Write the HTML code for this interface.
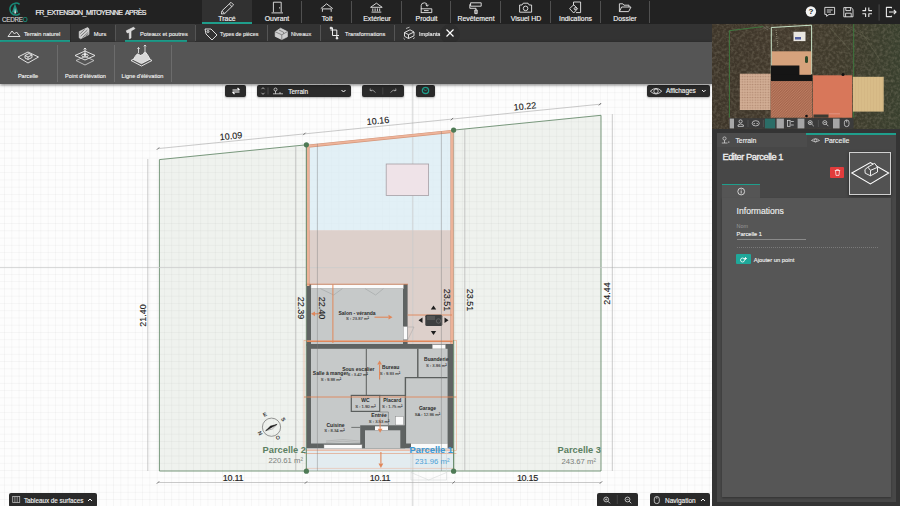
<!DOCTYPE html>
<html><head><meta charset="utf-8">
<style>
*{box-sizing:border-box}
html,body{margin:0;padding:0}
body{width:900px;height:506px;overflow:hidden;position:relative;background:#fff;font-family:"Liberation Sans",sans-serif;color:#fff}
.abs{position:absolute}
#canvas{left:0;top:84px;width:712px;height:422px;background-color:#fdfdfd;background-image:linear-gradient(90deg,rgba(0,0,0,0.033) 1px,transparent 1px),linear-gradient(180deg,rgba(0,0,0,0.033) 1px,transparent 1px);background-size:7.28px 7.28px;background-position:4.1px 1.0px}
#top{left:0;top:0;width:900px;height:24px;background:#222}
#sub{left:0;top:24px;width:712px;height:18px;background:#333}
#tools{left:0;top:42px;width:712px;height:41.5px;background:#555;box-shadow:0 1px 3px rgba(0,0,0,.5)}
.tab{position:absolute;top:0;height:24px;width:50px;text-align:center;font-size:7.5px;}
.tab .lbl{position:absolute;left:0;right:0;top:14px;line-height:9px}
.tab.sep{border-right:1px solid #3a3a3a}
.stab{position:absolute;top:0;height:18px;font-size:6.5px;line-height:18px;border-right:1px solid #4a4a4a}
.tool{position:absolute;top:0;height:41px;border-right:1px solid #6a6a6a;font-size:6px;text-align:center}
.tool .lbl{position:absolute;left:0;right:0;top:30px;line-height:8px}
.btn{position:absolute;background:#2b2b2b;border-radius:2px;height:12px}
</style></head>
<body>
<div id="canvas" class="abs"></div>

<!-- PLAN SVG -->
<svg class="abs" style="left:0;top:0" width="900" height="506" viewBox="0 0 900 506" font-family="Liberation Sans, sans-serif">
<polygon points="159.4,159.6 306.4,144.8 306.4,471 159.4,471" fill="rgba(120,150,110,0.10)" stroke="#6a8c6e" stroke-width="0.9"/>
<polygon points="453.6,130.1 601,115.3 601,471 453.6,471" fill="rgba(120,150,110,0.10)" stroke="#6a8c6e" stroke-width="0.9"/>
<polygon points="306.4,144.8 453.6,130.1 453.6,230.2 306.4,230.2" fill="#daecf3" fill-opacity="0.78"/>
<rect x="306.4" y="230.2" width="147.20000000000005" height="240.8" fill="#ddd0cb"/>
<rect x="306.4" y="448.3" width="147.20000000000005" height="22.69999999999999" fill="#e3eef4" fill-opacity="0.9"/>
<line x1="0" y1="267.6" x2="712" y2="267.6" stroke="#c9cccb" stroke-width="0.8"/>
<line x1="412.8" y1="84" x2="412.8" y2="506" stroke="#c9cccb" stroke-width="0.8"/>
<rect x="386.2" y="164" width="42.4" height="31.4" fill="#efe3e8" stroke="#a59ea4" stroke-width="0.8"/>
<line x1="158" y1="148.6" x2="601" y2="104.1" stroke="#a6a6a6" stroke-width="0.6"/>
<line x1="158" y1="482.5" x2="601" y2="482.5" stroke="#a6a6a6" stroke-width="0.6"/>
<line x1="147.8" y1="159" x2="147.8" y2="471" stroke="#a6a6a6" stroke-width="0.6"/>
<line x1="295.8" y1="146.4" x2="295.8" y2="471" stroke="#a6a6a6" stroke-width="0.6"/>
<line x1="464.8" y1="128.9" x2="464.8" y2="471" stroke="#a6a6a6" stroke-width="0.6"/>
<line x1="612.3" y1="114.1" x2="612.3" y2="471" stroke="#a6a6a6" stroke-width="0.6"/>
<line x1="156.8" y1="149.8" x2="159.2" y2="147.4" stroke="#555" stroke-width="0.8"/>
<line x1="303.2" y1="135.1" x2="305.59999999999997" y2="132.7" stroke="#555" stroke-width="0.8"/>
<line x1="450.8" y1="120.3" x2="453.2" y2="117.9" stroke="#555" stroke-width="0.8"/>
<line x1="598.8" y1="105.4" x2="601.2" y2="103.0" stroke="#555" stroke-width="0.8"/>
<line x1="156.8" y1="483.7" x2="159.2" y2="481.3" stroke="#555" stroke-width="0.8"/>
<line x1="304.8" y1="483.7" x2="307.2" y2="481.3" stroke="#555" stroke-width="0.8"/>
<line x1="452.40000000000003" y1="483.7" x2="454.8" y2="481.3" stroke="#555" stroke-width="0.8"/>
<line x1="599.8" y1="483.7" x2="602.2" y2="481.3" stroke="#555" stroke-width="0.8"/>
<rect x="306.4" y="284" width="101.2" height="62" fill="#5f6362"/>
<rect x="311" y="288.5" width="92" height="56" fill="#c6c9c9"/>
<rect x="311" y="284.2" width="92.5" height="4.5" fill="#fbfbfb" stroke="#9a9a9a" stroke-width="0.4"/>
<rect x="403.2" y="326.6" width="4.2" height="13" fill="#fbfbfb" stroke="#999" stroke-width="0.4"/>
<path d="M320.3 288.6 L333.7 295 L342.4 288.6 M365 288.6 L375.6 295 L383.5 288.6" fill="none" stroke="#8d9292" stroke-width="0.4"/>
<path d="M407.6 327 L414 327 L407.6 340" fill="none" stroke="#9a9a9a" stroke-width="0.4"/>
<rect x="306.4" y="344" width="146.8" height="104.3" fill="#5f6362"/>
<rect x="311" y="348.8" width="136.6" height="94.7" fill="#c6c9c9"/>
<rect x="432.3" y="344.6" width="13.2" height="4.3" fill="#fbfbfb" stroke="#999" stroke-width="0.4"/>
<line x1="366.3" y1="348.8" x2="366.3" y2="395.4" stroke="#5a5e5d" stroke-width="1"/>
<line x1="417.8" y1="348.8" x2="417.8" y2="377.6" stroke="#5a5e5d" stroke-width="1.4"/>
<line x1="405.4" y1="377.6" x2="447.6" y2="377.6" stroke="#5a5e5d" stroke-width="1.4"/>
<line x1="405.4" y1="377" x2="405.4" y2="444" stroke="#5a5e5d" stroke-width="1.4"/>
<line x1="379.7" y1="395.4" x2="405.4" y2="395.4" stroke="#5a5e5d" stroke-width="1"/>
<rect x="351.3" y="395.4" width="28.4" height="16" fill="none" stroke="#5a5e5d" stroke-width="1.2"/>
<path d="M379.7 412 L388.4 412 L388.4 425" fill="none" stroke="#5a5e5d" stroke-width="0.5"/>
<line x1="351.3" y1="427.4" x2="360.2" y2="427.4" stroke="#5a5e5d" stroke-width="0.8"/>
<rect x="360.2" y="425.3" width="45" height="23" fill="#5f6362"/>
<rect x="365" y="430.3" width="35.3" height="18" fill="#c6c9c9"/>
<rect x="375" y="426.3" width="13" height="3.8" fill="#fbfbfb"/>
<rect x="395.5" y="416.3" width="8" height="8.7" fill="#fbfbfb" stroke="#888" stroke-width="0.5"/>
<rect x="324" y="444.8" width="38" height="3.9" fill="#fbfbfb" stroke="#999" stroke-width="0.4"/>
<path d="M326 441 Q343 438 360 441 M326 442.5 Q343 440 360 442.5" fill="none" stroke="#999" stroke-width="0.4"/>
<rect x="411" y="443.5" width="36.6" height="4.8" fill="#fbfbfb"/>
<polyline points="308.0,286 308.0,146.1 452.0,131.4 452.0,344" fill="none" stroke="#d4967a" stroke-width="3.2"/>
<polyline points="308.0,286 308.0,146.1 452.0,131.4 452.0,344" fill="none" stroke="#eeb49a" stroke-width="1.9"/>
<line x1="306.4" y1="449.8" x2="453.6" y2="449.8" stroke="#eab9a4" stroke-width="0.8"/>
<line x1="306.4" y1="468.4" x2="453.6" y2="468.4" stroke="#eab9a4" stroke-width="0.6"/>
<rect x="304" y="340.4" width="152.4" height="110" fill="none" stroke="#eba98a" stroke-width="0.6"/>
<line x1="306.4" y1="341.4" x2="452.6" y2="341.4" stroke="#e0875a" stroke-width="1.2"/>
<line x1="304" y1="397" x2="456.4" y2="397" stroke="#e0875a" stroke-width="0.9"/>
<line x1="304" y1="453.5" x2="456.4" y2="453.5" stroke="#e0875a" stroke-width="0.5"/>
<line x1="332.9" y1="284.4" x2="332.9" y2="343" stroke="#e0875a" stroke-width="1"/>
<line x1="407.6" y1="315" x2="452" y2="315" stroke="#e0875a" stroke-width="0.9"/>
<line x1="306.4" y1="284.2" x2="408" y2="284.2" stroke="#e0875a" stroke-width="0.8"/>
<line x1="374.5" y1="317.2" x2="388.5" y2="317.2" stroke="#e0875a" stroke-width="1.1"/><polygon points="392.5,317.2 388.5,319.6 388.5,314.8" fill="#e0875a"/>
<line x1="320" y1="313.8" x2="315.0" y2="313.8" stroke="#e0875a" stroke-width="1.1"/><polygon points="311,313.8 315.0,311.4 315.0,316.2" fill="#e0875a"/>
<line x1="379.6" y1="379.4" x2="379.6" y2="364.4" stroke="#e0875a" stroke-width="1.1"/><polygon points="379.6,360.4 382.0,364.4 377.2,364.4" fill="#e0875a"/>
<line x1="380.1" y1="418.5" x2="380.1" y2="428.7" stroke="#e0875a" stroke-width="1.1"/><polygon points="380.1,432.7 377.7,428.7 382.5,428.7" fill="#e0875a"/>
<line x1="380.9" y1="452" x2="380.9" y2="463.5" stroke="#e0875a" stroke-width="1.1"/><polygon points="380.9,468 378.5,463.5 383.3,463.5" fill="#e0875a"/>
<rect x="425.3" y="314.7" width="17" height="11.3" rx="1.5" fill="#3d3f40"/>
<rect x="427" y="316" width="8" height="4" fill="#555" />
<circle cx="438.5" cy="321" r="2.2" fill="none" stroke="#777" stroke-width="0.6"/>
<polygon points="433.5,305.5 430.8,309.5 436.2,309.5" fill="#1e1e1e"/>
<polygon points="433.5,335 430.8,331 436.2,331" fill="#1e1e1e"/>
<polygon points="418.5,320.3 422.5,317.6 422.5,323" fill="#1e1e1e"/>
<polygon points="448.5,320.3 444.5,317.6 444.5,323" fill="#1e1e1e"/>
<polyline points="306.4,286 306.4,144.8" fill="none" stroke="#6a8c6e" stroke-width="0.9"/>
<line x1="306.4" y1="448.3" x2="306.4" y2="471" stroke="#6a8c6e" stroke-width="0.9"/>
<line x1="453.6" y1="448.3" x2="453.6" y2="471" stroke="#6a8c6e" stroke-width="0.9"/>
<line x1="306.4" y1="471" x2="453.6" y2="471" stroke="#7f9a82" stroke-width="0.8"/>
<path d="M411 449 L411 480 L446.5 480 L446.5 449 M411 472.5 L428.7 480 L446.5 472.5" fill="none" stroke="#cfd2d2" stroke-width="0.5"/>
<line x1="317.4" y1="143.7" x2="317.4" y2="471" stroke="#7a7a7a" stroke-opacity="0.7" stroke-width="0.6"/>
<line x1="441.4" y1="131.3" x2="441.4" y2="471" stroke="#7a7a7a" stroke-opacity="0.7" stroke-width="0.6"/>
<line x1="453.6" y1="340" x2="453.6" y2="471" stroke="#6a8c6e" stroke-width="0.9"/>
<line x1="306.4" y1="284" x2="306.4" y2="448.3" stroke="#6a8c6e" stroke-width="0.7" stroke-opacity="0.8"/>
<circle cx="306.4" cy="144.8" r="2.6" fill="#4e7a55"/>
<circle cx="453.6" cy="130.1" r="2.6" fill="#4e7a55"/>
<circle cx="306.4" cy="471.2" r="2.6" fill="#4e7a55"/>
<circle cx="453.6" cy="471.2" r="2.6" fill="#4e7a55"/>
<circle cx="271.5" cy="427.2" r="9.1" fill="none" stroke="#555" stroke-width="0.6"/>
<polygon points="265.7,430.7 272.4,428.9 277.1,424.3" fill="#fff" stroke="#333" stroke-width="0.4"/>
<polygon points="265.7,430.7 270.4,426.1 277.1,424.3" fill="#1a1a1a" stroke="#1a1a1a" stroke-width="0.4"/>
<text x="265" y="416.3" font-size="5.4" font-weight="bold" fill="#333" text-anchor="middle" transform="rotate(-30 265 414.7)">E</text>
<text x="283" y="421.2" font-size="5.4" font-weight="bold" fill="#333" text-anchor="middle" transform="rotate(60 283 419.59999999999997)">S</text>
<text x="278" y="439.5" font-size="5.4" font-weight="bold" fill="#333" text-anchor="middle" transform="rotate(-30 278 437.9)">O</text>
<text x="259.8" y="435" font-size="5.4" font-weight="bold" fill="#333" text-anchor="middle" transform="rotate(60 259.8 433.4)">N</text>
<text x="231" y="136.2" font-size="9" font-weight="normal" fill="#222" text-anchor="middle" dominant-baseline="central" transform="rotate(-5.73 231 136.2)" stroke="#222" stroke-width="0.12">10.09</text>
<text x="378" y="120.8" font-size="9" font-weight="normal" fill="#222" text-anchor="middle" dominant-baseline="central" transform="rotate(-5.73 378 120.8)" stroke="#222" stroke-width="0.12">10.16</text>
<text x="525" y="106.4" font-size="9" font-weight="normal" fill="#222" text-anchor="middle" dominant-baseline="central" transform="rotate(-5.73 525 106.4)" stroke="#222" stroke-width="0.12">10.22</text>
<text x="233" y="477.6" font-size="9" font-weight="normal" fill="#222" text-anchor="middle" dominant-baseline="central" stroke="#222" stroke-width="0.15" letter-spacing="-0.3">10.11</text>
<text x="380" y="477.6" font-size="9" font-weight="normal" fill="#222" text-anchor="middle" dominant-baseline="central" stroke="#222" stroke-width="0.15" letter-spacing="-0.3">10.11</text>
<text x="527.4" y="477.6" font-size="9" font-weight="normal" fill="#222" text-anchor="middle" dominant-baseline="central" stroke="#222" stroke-width="0.15" letter-spacing="-0.3">10.15</text>
<text x="143.3" y="315.4" font-size="9" font-weight="normal" fill="#222" text-anchor="middle" dominant-baseline="central" transform="rotate(-90.00 143.3 315.4)" stroke="#222" stroke-width="0.12">21.40</text>
<text x="606.6" y="293.6" font-size="9" font-weight="normal" fill="#222" text-anchor="middle" dominant-baseline="central" transform="rotate(-90.00 606.6 293.6)" stroke="#222" stroke-width="0.12">24.44</text>
<text x="300.5" y="308" font-size="9" font-weight="normal" fill="#222" text-anchor="middle" dominant-baseline="central" transform="rotate(90.00 300.5 308)" stroke="#222" stroke-width="0.12">22.39</text>
<text x="322.2" y="308" font-size="9" font-weight="normal" fill="#222" text-anchor="middle" dominant-baseline="central" transform="rotate(90.00 322.2 308)" stroke="#222" stroke-width="0.12">22.40</text>
<text x="446.5" y="300.1" font-size="9" font-weight="normal" fill="#222" text-anchor="middle" dominant-baseline="central" transform="rotate(90.00 446.5 300.1)" stroke="#222" stroke-width="0.12">23.51</text>
<text x="469.7" y="300.1" font-size="9" font-weight="normal" fill="#222" text-anchor="middle" dominant-baseline="central" transform="rotate(90.00 469.7 300.1)" stroke="#222" stroke-width="0.12">23.51</text>
<text x="306" y="450.2" font-size="9.3" font-weight="bold" fill="#5b8062" text-anchor="end" dominant-baseline="central">Parcelle 2</text>
<text x="303" y="460.6" font-size="7.7" font-weight="normal" fill="#7a7f7a" text-anchor="end" dominant-baseline="central">220.61 m²</text>
<text x="601" y="450.2" font-size="9.3" font-weight="bold" fill="#5b8062" text-anchor="end" dominant-baseline="central">Parcelle 3</text>
<text x="596" y="461" font-size="7.7" font-weight="normal" fill="#7a7f7a" text-anchor="end" dominant-baseline="central">243.67 m²</text>
<text x="453" y="450.4" font-size="9.3" font-weight="bold" fill="#3b98d4" text-anchor="end" dominant-baseline="central">Parcelle 1</text>
<text x="449.5" y="461" font-size="7.7" font-weight="normal" fill="#4ba0d6" text-anchor="end" dominant-baseline="central">231.96 m²</text>
<text x="357" y="313.2" font-size="5" font-weight="bold" fill="#2a2a2a" text-anchor="middle" dominant-baseline="central">Salon - véranda</text>
<text x="358.3" y="368.7" font-size="5" font-weight="bold" fill="#2a2a2a" text-anchor="middle" dominant-baseline="central">Sous escalier</text>
<text x="330.5" y="373" font-size="5" font-weight="bold" fill="#2a2a2a" text-anchor="middle" dominant-baseline="central">Salle à manger</text>
<text x="390.7" y="367.2" font-size="5" font-weight="bold" fill="#2a2a2a" text-anchor="middle" dominant-baseline="central">Bureau</text>
<text x="436.3" y="359.2" font-size="5" font-weight="bold" fill="#2a2a2a" text-anchor="middle" dominant-baseline="central">Buanderie</text>
<text x="365.5" y="400.1" font-size="5" font-weight="bold" fill="#2a2a2a" text-anchor="middle" dominant-baseline="central">WC</text>
<text x="392.2" y="400.1" font-size="5" font-weight="bold" fill="#2a2a2a" text-anchor="middle" dominant-baseline="central">Placard</text>
<text x="379.1" y="414.9" font-size="5" font-weight="bold" fill="#2a2a2a" text-anchor="middle" dominant-baseline="central">Entrée</text>
<text x="335.5" y="424.6" font-size="5" font-weight="bold" fill="#2a2a2a" text-anchor="middle" dominant-baseline="central">Cuisine</text>
<text x="427.5" y="408" font-size="5" font-weight="bold" fill="#2a2a2a" text-anchor="middle" dominant-baseline="central">Garage</text>
<text x="357.5" y="318.8" font-size="4.2" font-weight="normal" fill="#333" text-anchor="middle" dominant-baseline="central" stroke="#333" stroke-width="0.08">S : 23.87 m²</text>
<text x="357.7" y="374.6" font-size="4.2" font-weight="normal" fill="#333" text-anchor="middle" dominant-baseline="central" stroke="#333" stroke-width="0.08">S : 3.42 m²</text>
<text x="331" y="379" font-size="4.2" font-weight="normal" fill="#333" text-anchor="middle" dominant-baseline="central" stroke="#333" stroke-width="0.08">S : 9.98 m²</text>
<text x="390" y="373.1" font-size="4.2" font-weight="normal" fill="#333" text-anchor="middle" dominant-baseline="central" stroke="#333" stroke-width="0.08">S : 9.93 m²</text>
<text x="436.3" y="365" font-size="4.2" font-weight="normal" fill="#333" text-anchor="middle" dominant-baseline="central" stroke="#333" stroke-width="0.08">S : 3.96 m²</text>
<text x="365.5" y="406" font-size="4.2" font-weight="normal" fill="#333" text-anchor="middle" dominant-baseline="central" stroke="#333" stroke-width="0.08">S : 1.90 m²</text>
<text x="392.2" y="406" font-size="4.2" font-weight="normal" fill="#333" text-anchor="middle" dominant-baseline="central" stroke="#333" stroke-width="0.08">S : 1.75 m²</text>
<text x="379.1" y="421.1" font-size="4.2" font-weight="normal" fill="#333" text-anchor="middle" dominant-baseline="central" stroke="#333" stroke-width="0.08">S : 3.53 m²</text>
<text x="334.5" y="430" font-size="4.2" font-weight="normal" fill="#333" text-anchor="middle" dominant-baseline="central" stroke="#333" stroke-width="0.08">S : 8.34 m²</text>
<text x="427.5" y="414" font-size="4.2" font-weight="normal" fill="#333" text-anchor="middle" dominant-baseline="central" stroke="#333" stroke-width="0.08">SA : 12.96 m²</text>
</svg>

<!-- canvas buttons -->
<div class="abs" style="left:225.4px;top:84.8px;width:21px;height:12.2px;background:#2a2a2a;border-radius:2px;box-shadow:0 1px 2px rgba(0,0,0,.3)">
 <svg class="abs" style="left:5.5px;top:2.1px" width="10" height="8" viewBox="0 0 10 8"><path d="M1.5 3 L8.5 3 M6.5 1 L8.5 3 M1.5 5 L8.5 5 M3.5 7 L1.5 5" fill="none" stroke="#fff" stroke-width="1.1"/></svg>
</div>
<div class="abs" style="left:257.2px;top:84.8px;width:93.6px;height:12.2px;background:#2a2a2a;border-radius:2px;box-shadow:0 1px 2px rgba(0,0,0,.3)">
 <svg class="abs" style="left:0;top:0" width="94" height="12" viewBox="0 0 94 12">
  <path d="M4.5 4.2 L6 2.6 L7.5 4.2 M4.5 7.8 L6 9.4 L7.5 7.8" fill="none" stroke="#ccc" stroke-width="0.8"/>
  <line x1="11" y1="2.5" x2="11" y2="9.5" stroke="#666" stroke-width="0.6"/>
  <circle cx="18.5" cy="4.5" r="1.5" fill="none" stroke="#eee" stroke-width="0.7"/>
  <path d="M16 8.8 L26 8.8 M18.5 6 L18.5 8.8 M23 7 L23 8.8" fill="none" stroke="#eee" stroke-width="0.7"/>
  <path d="M84.5 5 L86.5 7 L88.5 5" fill="none" stroke="#fff" stroke-width="1"/>
 </svg>
 <div class="abs" style="left:31px;top:0.8px;font-size:6.5px;line-height:12.2px;color:#f2f2f2;-webkit-text-stroke:0.13px #f2f2f2">Terrain</div>
</div>
<div class="abs" style="left:362.3px;top:84.8px;width:41.6px;height:12.2px;background:#2a2a2a;border-radius:2px;box-shadow:0 1px 2px rgba(0,0,0,.3)">
 <svg class="abs" style="left:0;top:0" width="42" height="12" viewBox="0 0 42 12">
  <path d="M8 5.5 Q11 4 13.5 7.5 M8 5.5 L8.3 3.5 M8 5.5 L10 5.8" fill="none" stroke="#aaa" stroke-width="0.8"/>
  <line x1="20.8" y1="2.5" x2="20.8" y2="9.5" stroke="#555" stroke-width="0.6"/>
  <path d="M34 5.5 Q31 4 28.5 7.5 M34 5.5 L33.7 3.5 M34 5.5 L32 5.8" fill="none" stroke="#aaa" stroke-width="0.8"/>
 </svg>
</div>
<div class="abs" style="left:415.6px;top:84.8px;width:19.6px;height:12.2px;background:#2a2a2a;border-radius:2px;box-shadow:0 1px 2px rgba(0,0,0,.3)">
 <svg class="abs" style="left:5.3px;top:1.6px" width="9" height="9" viewBox="0 0 9 9"><circle cx="4.5" cy="4.5" r="3.2" fill="none" stroke="#1f9e8c" stroke-width="1.2"/><path d="M2.5 3 L4.5 5 L6 3.5 M4 6.5 L5 7.5" stroke="#1f9e8c" stroke-width="0.8" fill="none"/></svg>
</div>
<div class="abs" style="left:647.3px;top:84.7px;width:62.7px;height:12px;background:#2a2a2a;border-radius:2px;box-shadow:0 1px 2px rgba(0,0,0,.3)">
 <svg class="abs" style="left:0;top:0" width="63" height="12" viewBox="0 0 63 12">
  <path d="M3.3 6.2 Q9 0.6 14.7 6.2 Q9 11.8 3.3 6.2 Z" fill="none" stroke="#eee" stroke-width="0.8"/>
  <circle cx="9" cy="6.2" r="2.2" fill="none" stroke="#eee" stroke-width="0.8"/>
  <path d="M55 5 L56.8 6.8 L58.6 5" fill="none" stroke="#fff" stroke-width="1"/>
 </svg>
 <div class="abs" style="left:18.7px;top:0.8px;font-size:6.4px;line-height:12px;color:#f2f2f2;-webkit-text-stroke:0.13px #f2f2f2">Affichages</div>
</div>
<div class="abs" style="left:8.6px;top:493px;width:88.6px;height:14px;background:#2a2a2a;border-radius:2px">
 <svg class="abs" style="left:0;top:0" width="89" height="13" viewBox="0 0 89 13">
  <rect x="3.7" y="3.5" width="7" height="6" fill="none" stroke="#bbb" stroke-width="0.8"/>
  <path d="M5.9 3.5 L5.9 9.5 M8.2 3.5 L8.2 9.5" stroke="#bbb" stroke-width="0.7"/>
  <path d="M79 8 L81 6 L83 8" fill="none" stroke="#fff" stroke-width="1"/>
 </svg>
 <div class="abs" style="left:15.3px;top:0;font-size:6.3px;line-height:15px;color:#f2f2f2;-webkit-text-stroke:0.13px #f2f2f2">Tableaux de surfaces</div>
</div>
<div class="abs" style="left:597px;top:493.4px;width:40.7px;height:14px;background:#2a2a2a;border-radius:2px">
 <svg class="abs" style="left:0;top:0" width="41" height="13" viewBox="0 0 41 13">
  <circle cx="9.2" cy="6.5" r="2.4" fill="none" stroke="#ddd" stroke-width="0.8"/><path d="M10.9 8.2 L13 10.3" stroke="#ddd" stroke-width="0.9"/><path d="M8 6.5 L10.4 6.5 M9.2 5.3 L9.2 7.7" stroke="#ddd" stroke-width="0.6"/>
  <line x1="20.3" y1="2" x2="20.3" y2="11" stroke="#555" stroke-width="0.6"/>
  <circle cx="30.5" cy="6.5" r="2.4" fill="none" stroke="#ddd" stroke-width="0.8"/><path d="M32.2 8.2 L34.3 10.3" stroke="#ddd" stroke-width="0.9"/><path d="M29.3 6.5 L31.7 6.5" stroke="#ddd" stroke-width="0.6"/>
 </svg>
</div>
<div class="abs" style="left:650px;top:493.4px;width:60px;height:14px;background:#2a2a2a;border-radius:2px">
 <svg class="abs" style="left:0;top:0" width="60" height="13" viewBox="0 0 60 13">
  <rect x="4.3" y="3.6" width="5" height="7" rx="2.3" fill="none" stroke="#ddd" stroke-width="0.8"/><path d="M6.8 3.6 L6.8 6" stroke="#ddd" stroke-width="0.6"/>
  <path d="M51 8 L53 6 L55 8" fill="none" stroke="#fff" stroke-width="1"/>
 </svg>
 <div class="abs" style="left:15px;top:0;font-size:6.5px;line-height:15px;color:#f2f2f2;-webkit-text-stroke:0.13px #f2f2f2">Navigation</div>
</div>
<div id="top" class="abs">
 <svg class="abs" style="left:0;top:0" width="36" height="24" viewBox="0 0 36 24">
  <path d="M19.6 4.4 A6 6 0 1 0 19.9 13.6" fill="none" stroke="#188a78" stroke-width="1.5"/>
  <path d="M15 3.6 L18.2 12.6 L11.8 12.6 Z" fill="#1f8f80"/>
  <path d="M15 8 L16.2 13.4 L14.3 13.4 Z" fill="#e6e6e6"/>
 </svg>
 <div class="abs" style="left:2px;top:15.8px;font-size:6.3px;line-height:8px;color:#d0d0d0;letter-spacing:-0.25px;-webkit-text-stroke:0.15px #d0d0d0">CEDRE<span style="color:#1d9a88;-webkit-text-stroke:0.15px #1d9a88">O</span></div>
 <div class="abs" style="left:35.5px;top:7.5px;font-size:7px;line-height:9px;color:#f2f2f2;letter-spacing:-0.55px;word-spacing:1.5px;-webkit-text-stroke:0.2px #f2f2f2">FR_EXTENSION_MITOYENNE APRÈS</div>
 <div class="abs" style="left:202px;top:0;width:50px;height:24px;background:#313131;border-bottom:2px solid #1f9e8c"></div>
 <div class="abs" style="left:202px;top:14px;width:50px;text-align:center;font-size:6.9px;line-height:9px;color:#f4f4f4;-webkit-text-stroke:0.15px #f4f4f4">Tracé</div>
 <div class="abs" style="left:252px;top:14px;width:50px;text-align:center;font-size:6.9px;line-height:9px;color:#f4f4f4;-webkit-text-stroke:0.15px #f4f4f4">Ouvrant</div>
 <div class="abs" style="left:302px;top:14px;width:50px;text-align:center;font-size:6.9px;line-height:9px;color:#f4f4f4;-webkit-text-stroke:0.15px #f4f4f4">Toit</div>
 <div class="abs" style="left:352px;top:14px;width:50px;text-align:center;font-size:6.9px;line-height:9px;color:#f4f4f4;-webkit-text-stroke:0.15px #f4f4f4">Extérieur</div>
 <div class="abs" style="left:402px;top:14px;width:49px;text-align:center;font-size:6.9px;line-height:9px;color:#f4f4f4;-webkit-text-stroke:0.15px #f4f4f4">Produit</div>
 <div class="abs" style="left:451px;top:14px;width:50px;text-align:center;font-size:6.9px;line-height:9px;color:#f4f4f4;-webkit-text-stroke:0.15px #f4f4f4">Revêtement</div>
 <div class="abs" style="left:501px;top:14px;width:50px;text-align:center;font-size:6.9px;line-height:9px;color:#f4f4f4;-webkit-text-stroke:0.15px #f4f4f4">Visuel HD</div>
 <div class="abs" style="left:551px;top:14px;width:49px;text-align:center;font-size:6.9px;line-height:9px;color:#f4f4f4;-webkit-text-stroke:0.15px #f4f4f4">Indications</div>
 <div class="abs" style="left:600px;top:14px;width:50px;text-align:center;font-size:6.9px;line-height:9px;color:#f4f4f4;-webkit-text-stroke:0.15px #f4f4f4">Dossier</div>
 <div class="abs" style="left:301.0px;top:1px;width:1px;height:22px;background:#505050"></div>
 <div class="abs" style="left:351.0px;top:1px;width:1px;height:22px;background:#505050"></div>
 <div class="abs" style="left:401.0px;top:1px;width:1px;height:22px;background:#505050"></div>
 <div class="abs" style="left:450.0px;top:1px;width:1px;height:22px;background:#505050"></div>
 <div class="abs" style="left:500.0px;top:1px;width:1px;height:22px;background:#505050"></div>
 <div class="abs" style="left:550.0px;top:1px;width:1px;height:22px;background:#505050"></div>
 <div class="abs" style="left:600.0px;top:1px;width:1px;height:22px;background:#505050"></div>
 <div class="abs" style="left:649.0px;top:1px;width:1px;height:22px;background:#505050"></div>
 <svg class="abs" style="left:0;top:0" width="900" height="24" viewBox="0 0 900 24">
  <g fill="none" stroke="#e8e8e8" stroke-width="0.9" stroke-linejoin="round">
   <!-- pencil -->
   <path d="M231 2.3 L233.6 4.9 L224.6 13.6 L221.4 14 L221.9 10.9 Z M222.4 11.2 L224.6 13.4 M229.3 4 L232 6.7"/>
   <!-- door -->
   <path d="M273.4 12.2 L273.4 2.2 L281.2 2.2 L281.2 12.2 M271.5 12.9 L283 12.9"/>
   <circle cx="279.6" cy="7.8" r="0.6" fill="#e8e8e8" stroke="none"/>
   <!-- roof -->
   <path d="M320.8 8.6 L326.6 3.8 L332.8 8.6 M322.4 8.6 L322.4 11.8 M331.2 8.6 L331.2 11.8 M322.4 8.9 L331.2 8.9"/>
   <!-- exterieur -->
   <path d="M370.6 7.3 L376.4 3.2 L382.2 7.3 Z M371.5 12.1 L381.3 12.1 M372.8 8.4 L372.8 11.3 M375.1 8.4 L375.1 11.3 M377.4 8.4 L377.4 11.3 M379.7 8.4 L379.7 11.3"/>
   <!-- produit -->
   <path d="M421.2 12.6 L421.2 5.5 Q421.2 2.8 424.6 2.8 Q427.2 2.8 427.2 5.8 M425.7 4.7 L427.2 6.3 L428.7 4.7 M420.8 8.8 L431.8 8.8 L431.8 12.6 L420.8 12.6 M424 10.6 L428.6 10.6"/>
   <!-- roller -->
   <path d="M470.6 2.8 L481.2 2.8 L481.2 6.2 L470.6 6.2 Z M470.6 4.5 L469.8 4.5 L469.8 8.3 L476 8.3 L476 13.3 M474.8 10 L477.2 10 L477.2 13.6 L474.8 13.6 Z"/>
   <!-- camera -->
   <path d="M519.6 5 L522 5 L523.2 3.2 L528 3.2 L529.2 5 L531.6 5 L531.6 12.2 L519.6 12.2 Z"/>
   <circle cx="525.6" cy="8.4" r="2.3"/>
   <!-- indications -->
   <path d="M573.5 2 L580.6 2 L580.6 12.6 L576 12.6 M573.5 2 L573.5 5.5 M569.6 8.6 L573.7 4.8 L577.6 8.6 L573.7 13 Z"/>
   <circle cx="575.2" cy="8.7" r="1.1"/>
   <!-- folder -->
   <path d="M619.4 11.6 L619.4 3.8 L622.8 3.8 L623.9 5.2 L629 5.2 L629 7 M619.4 11.6 L621.6 7 L631 7 L628.6 11.6 Z"/>
   <!-- chat -->
   <path d="M824.8 7.4 L834.6 7.4 L834.6 14.4 L829 14.4 L826.6 16.3 L826.6 14.4 L824.8 14.4 Z M826.8 10 L832.6 10 M826.8 12 L831 12"/>
   <!-- save -->
   <path d="M843.8 7.6 L851.2 7.6 L853 9.4 L853 16.8 L843.8 16.8 Z M845.8 7.6 L845.8 10.6 L850.6 10.6 L850.6 7.6 M845.6 16.8 L845.6 13.2 L851.2 13.2 L851.2 16.8"/>
   <!-- compress -->
   <path d="M865.6 7.4 L865.6 10.6 L862.4 10.6 M868.8 7.4 L868.8 10.6 L872 10.6 M865.6 17 L865.6 13.8 L862.4 13.8 M868.8 17 L868.8 13.8 L872 13.8" stroke-width="1.1"/>
   <!-- exit -->
   <path d="M891.5 8.2 L891.5 7.4 L886.4 7.4 L886.4 16.6 L891.5 16.6 L891.5 15.8 M889 12 L896 12 M893.8 9.8 L896 12 L893.8 14.2" stroke-width="1.1"/>
  </g>
  <circle cx="810.9" cy="11.5" r="5.2" fill="#f4f4f4"/>
  <text x="810.9" y="14.4" font-size="8" font-weight="bold" fill="#222" text-anchor="middle" font-family="Liberation Sans">?</text>
  <line x1="879.1" y1="4.4" x2="879.1" y2="20.6" stroke="#555" stroke-width="0.8"/>
 </svg>
</div>
<div id="sub" class="abs">
 <div class="abs" style="left:0;top:0;width:70px;height:18px;background:#464646;border-bottom:2px solid #1f9e8c"></div>
 <div class="abs" style="left:115px;top:0;width:80px;height:18px;background:#3c3c3c"></div>
 <div class="abs" style="left:125px;top:16px;width:62px;height:2px;background:#1f9e8c"></div>
 <svg class="abs" style="left:0;top:0" width="470" height="18" viewBox="0 0 470 18">
  <g fill="none" stroke="#eee" stroke-width="0.9">
   <path d="M8 12.5 L12 7 L14.5 10 L16.5 8 L20 12.5 Z"/>
   <path d="M79.2 7.5 L87.6 3.5 L89 4.8 L89 10.5 L80.6 14.8 L79.2 13.8 Z" fill="#d0d0d0" stroke="#e0e0e0" stroke-width="0.6"/>
   <path d="M80.2 9.6 L84.6 5.4 M80.6 12.2 L87.4 6 M82.6 13.4 L88.4 8.2 M85.6 12.2 L88.6 9.8" stroke="#555" stroke-width="0.7"/>
   <path d="M126.3 6.8 L133.6 3.2 L135 4.6 L131 7 L131 14 L129.4 14.8 L129.2 8.2 L127.2 9 Z" fill="#d8d8d8" stroke="#eee" stroke-width="0.6"/>
   <path d="M205 5 L211 5 L217 11 L212 16 L206 10 Z"/><circle cx="208" cy="7.5" r="1"/>
   <path d="M275.2 7.8 L280.5 4.2 L287.4 7.6 L287.4 12.8 L281.8 15.6 L275.2 12.4 Z" fill="#cfcfcf" stroke="#e6e6e6" stroke-width="0.6"/>
   <path d="M275.2 7.8 L281.8 10.8 L287.4 7.6 M281.8 10.8 L281.8 15.6 M279 6 L283.5 8.2 L283.5 9.6" stroke="#555" stroke-width="0.6"/>
   <path d="M332.5 3.5 L332.5 11.5 L339 11.5 M330.5 6 L336.8 6 L336.8 13.6" stroke-width="1"/>
   <circle cx="331" cy="4" r="0.9" fill="#eee"/><circle cx="337" cy="14.2" r="0.9" fill="#eee"/>
   <path d="M404.5 8.5 L410 5.8 L414 8 L414 11.8 L408.5 14.5 L404.5 12.3 Z M404.5 8.5 L408.5 10.7 L414 8 M408.5 10.7 L408.5 14.5"/>
   <path d="M406 4.5 L409.5 3.2 M403.5 14.2 L405 15.6 M413 14.8 L414.8 13.6" stroke-width="0.7"/>
  </g>
 </svg>
 <div class="abs" style="left:24px;top:0;font-size:5.7px;line-height:20px;color:#f0f0f0;-webkit-text-stroke:0.12px #f0f0f0">Terrain naturel</div>
 <div class="abs" style="left:93.7px;top:0;font-size:5.7px;line-height:20px;color:#f0f0f0;-webkit-text-stroke:0.12px #f0f0f0">Murs</div>
 <div class="abs" style="left:140px;top:0;font-size:5.7px;line-height:20px;color:#f0f0f0;-webkit-text-stroke:0.12px #f0f0f0">Poteaux et poutres</div>
 <div class="abs" style="left:220px;top:0;font-size:5.3px;line-height:20px;color:#f0f0f0;-webkit-text-stroke:0.12px #f0f0f0">Types de pièces</div>
 <div class="abs" style="left:291px;top:0;font-size:5.6px;line-height:20px;color:#f0f0f0;-webkit-text-stroke:0.12px #f0f0f0">Niveaux</div>
 <div class="abs" style="left:345px;top:0;font-size:5.6px;line-height:20px;color:#f0f0f0;-webkit-text-stroke:0.12px #f0f0f0">Transformations</div>
 <div class="abs" style="left:419px;top:0;width:34px;overflow:hidden;white-space:nowrap;-webkit-mask-image:linear-gradient(90deg,#000 60%,transparent 95%);font-size:5.6px;line-height:20px;color:#f0f0f0;-webkit-text-stroke:0.12px #f0f0f0">Implantation</div>
 <div class="abs" style="left:70px;top:0;width:1px;height:18px;background:#2a2a2a"></div>
 <div class="abs" style="left:115px;top:1px;width:1px;height:16px;background:#555"></div>
 <div class="abs" style="left:195px;top:1px;width:1px;height:16px;background:#555"></div>
 <div class="abs" style="left:267.3px;top:1px;width:1px;height:16px;background:#555"></div>
 <div class="abs" style="left:320px;top:1px;width:1px;height:16px;background:#555"></div>
 <div class="abs" style="left:394px;top:1px;width:1px;height:16px;background:#555"></div>
 <div class="abs" style="left:440px;top:0;width:20px;height:20px;border-radius:10px;background:#2e2e2e"></div>
 <svg class="abs" style="left:445px;top:4px" width="10" height="10" viewBox="0 0 10 10"><path d="M1.5 1.5 L8.5 8.5 M8.5 1.5 L1.5 8.5" stroke="#fff" stroke-width="1.2"/></svg>
</div>
<div id="tools" class="abs">
 <div class="abs" style="left:56.5px;top:3px;width:1px;height:37px;background:#6c6c6c"></div>
 <div class="abs" style="left:113.5px;top:3px;width:1px;height:37px;background:#6c6c6c"></div>
 <div class="abs" style="left:170.5px;top:3px;width:1px;height:37px;background:#6c6c6c"></div>
 <svg class="abs" style="left:0;top:0" width="180" height="41" viewBox="0 0 180 41">
  <g fill="none" stroke="#f2f2f2" stroke-width="0.9">
   <path d="M18 15 L28 10 L38.5 15 L28 21 Z"/>
   <path d="M25 13.5 L29 11.5 L32 13 L32 15.5 L28 17.5 L25 16 Z M25 13.5 L28 15 L32 13 M28 15 L28 17.5"/>
   <path d="M75 13.5 L85 9 L95 13.5 L85 18 Z"/>
   <path d="M76 18.5 L85 14.5 L94 18.5 L85 23 Z" stroke="#c8c8c8"/>
   <ellipse cx="85" cy="13.5" rx="3.2" ry="1.6"/>
   <path d="M85 6 L85 13.5 M83.6 7.4 L85 6 L86.4 7.4"/>
   <circle cx="85" cy="12.6" r="0.9" fill="#f2f2f2"/>
   <path d="M131 18.5 L141.5 13 L152 18.5 L141.5 24 Z"/>
   <path d="M133.5 17.6 Q137 10 139 12.5 Q141.5 15.5 145 9.5 Q148 13 150 17.2 L141.5 21.6 Z" fill="#d8d8d8" stroke="#eee"/>
   <path d="M138.5 5.5 L138.5 11 M137.3 6.8 L138.5 5.5 L139.7 6.8 M145 3 L145 9 M143.8 4.3 L145 3 L146.2 4.3" stroke-width="0.8"/>
  </g>
 </svg>
 <div class="abs" style="left:0;top:30px;width:56px;text-align:center;font-size:5.6px;line-height:8px;color:#f4f4f4;-webkit-text-stroke:0.12px #f4f4f4">Parcelle</div>
 <div class="abs" style="left:57px;top:30px;width:57px;text-align:center;font-size:5.6px;line-height:8px;color:#f4f4f4;-webkit-text-stroke:0.12px #f4f4f4">Point d'élévation</div>
 <div class="abs" style="left:114px;top:30px;width:57px;text-align:center;font-size:5.6px;line-height:8px;color:#f4f4f4;-webkit-text-stroke:0.12px #f4f4f4">Ligne d'élévation</div>
</div>

<!-- minimap -->
<div class="abs" style="left:712px;top:24px;width:188px;height:105px;overflow:hidden;background:linear-gradient(90deg,#3d3529 0%,#433a2d 40%,#3f3b2c 70%,#39402e 100%)">
 <svg class="abs" style="left:0;top:0" width="188" height="105" viewBox="712 24 188 105">
  <defs>
   <pattern id="tile" width="2.6" height="2.6" patternUnits="userSpaceOnUse"><rect width="2.6" height="2.6" fill="#a6674e"/><path d="M0 2.6 L2.6 0" stroke="#c4856a" stroke-width="0.8"/></pattern>
   <pattern id="tile2" width="2.6" height="2.6" patternUnits="userSpaceOnUse"><rect width="2.6" height="2.6" fill="#d2ae95"/><circle cx="1.3" cy="1.3" r="0.75" fill="#b08870"/></pattern>
   <pattern id="wood" width="3" height="3" patternUnits="userSpaceOnUse"><rect width="3" height="3" fill="#d8bc88"/><line x1="0" y1="0" x2="0" y2="3" stroke="#c6a976" stroke-width="0.5"/></pattern>
   <filter id="grass" x="0" y="0" width="1" height="1"><feTurbulence type="fractalNoise" baseFrequency="0.35" numOctaves="2" seed="3"/><feColorMatrix type="matrix" values="0 0 0 0 0.45  0 0 0 0 0.40  0 0 0 0 0.30  0 0 0 1.2 -0.45"/></filter>
  </defs>
  <rect x="712" y="24" width="188" height="105" filter="url(#grass)" opacity="0.45"/>
  <path d="M860 30 L880 60 M830 28 L850 50 M845 26 L870 40 M770 26 L760 30" stroke="#6b6b55" stroke-width="0.5" fill="none"/>
  <polyline points="729.4,117.6 729.4,30.7 763,26.6" fill="none" stroke="#3d7d40" stroke-width="0.9"/>
  <line x1="853.7" y1="24" x2="853.7" y2="117.6" stroke="#3d7d40" stroke-width="0.9"/>
  <path d="M763 26.6 L768 30 M766 26 L770 29" stroke="#8d8d80" stroke-width="0.5"/>
  <polyline points="771.3,74 771.3,27.5 811.6,25.2 811.6,74" fill="none" stroke="#c8e3c8" stroke-width="1"/>
  <rect x="793.5" y="31.8" width="12" height="9.3" fill="#e9e6e0"/>
  <rect x="795" y="37" width="6" height="2.5" fill="#5561a0"/>
  <path d="M776 30 L778 48" stroke="#8a8570" stroke-width="1" stroke-dasharray="1 1"/>
  <rect x="771.8" y="51.3" width="39.5" height="24" fill="#d6a27c"/>
  <rect x="805" y="56" width="3" height="7" rx="1.5" fill="#2f4a2a"/>
  <rect x="771" y="65.5" width="28.4" height="15.5" fill="#151515"/>
  <rect x="771" y="74.8" width="41" height="6.2" fill="#151515"/>
  <rect x="739.8" y="73.7" width="30.9" height="36.3" fill="url(#tile2)"/>
  <rect x="770.7" y="81.1" width="41.7" height="36.6" fill="url(#tile)"/>
  <rect x="813" y="75.3" width="39.2" height="42.4" fill="#d8775a"/>
  <rect x="813.5" y="114.5" width="15" height="3.2" fill="#3a3a32"/>
  <line x1="829" y1="113.8" x2="840" y2="113.8" stroke="#e8a8a0" stroke-width="0.6"/>
  <rect x="852.9" y="76.8" width="30.8" height="34.8" fill="url(#wood)"/>
  <circle cx="843" cy="74.5" r="1.5" fill="#111"/>
  <circle cx="806.5" cy="116" r="1.3" fill="#111"/>
  <rect x="729.4" y="118.2" width="124.2" height="10.5" fill="#3b3b3b"/>
  <rect x="729.7" y="118.6" width="4.3" height="9.8" fill="#a8a8a8"/>
  <rect x="764.9" y="118.6" width="10.2" height="9.8" fill="#2b6d67"/>
  <rect x="776.6" y="118.6" width="7.3" height="9.8" fill="#a5a5a5"/>
  <rect x="797.6" y="118.6" width="6.8" height="9.8" fill="#a5a5a5"/>
  <rect x="833" y="118.6" width="6.6" height="9.8" fill="#a5a5a5"/>
  <g fill="none" stroke="#e2e2e2" stroke-width="0.7">
   <circle cx="740.6" cy="121.4" r="1.6"/><path d="M738 126.4 L743.4 126.4 L743.4 125 Q740.6 123 738 125 Z"/>
   <ellipse cx="755.7" cy="123.3" rx="3.6" ry="2.6"/><path d="M753.5 123.6 L755 123.6 M756.5 123.6 L758 123.6"/>
   <rect x="787.5" y="120.3" width="2.6" height="6" /><path d="M791 121.5 L793.8 121.5 M791 125 L793.8 125"/>
   <circle cx="810.2" cy="122.6" r="2"/><path d="M811.7 124.1 L813.8 126.2 M809.2 122.6 L811.2 122.6 M810.2 121.6 L810.2 123.6"/>
   <circle cx="824.8" cy="122.6" r="2"/><path d="M826.3 124.1 L828.4 126.2 M823.8 122.6 L825.8 122.6"/>
   <rect x="844.4" y="120" width="4.6" height="6.6" rx="2.2"/><path d="M846.7 120 L846.7 122.5"/>
  </g>
  <g stroke="#666" stroke-width="0.5"><line x1="748" y1="120" x2="748" y2="127"/><line x1="763.4" y1="120" x2="763.4" y2="127"/><line x1="818.4" y1="120" x2="818.4" y2="127"/></g>
 </svg>
</div>
<!-- right panel -->
<div class="abs" style="left:712px;top:128.8px;width:188px;height:377.2px;background:#343434"></div>
<div class="abs" style="left:717px;top:133px;width:179px;height:368.6px;background:#474747"></div>
<div class="abs" style="left:717px;top:133px;width:90px;height:14.2px;background:#4c4c4c"></div>
<div class="abs" style="left:806.4px;top:133.4px;width:89.4px;height:1.7px;background:#1f9e8c"></div>
<svg class="abs" style="left:712px;top:130px" width="188" height="20" viewBox="0 0 188 20">
 <circle cx="12.5" cy="8.5" r="1.6" fill="none" stroke="#ddd" stroke-width="0.7"/>
 <path d="M9.8 13 L15.5 13 M12.5 10.2 L12.5 13 M16.8 11.3 L16.8 13" fill="none" stroke="#ddd" stroke-width="0.7"/>
 <path d="M99.5 10.5 Q103.5 7 107.5 10.5 Q103.5 13.5 99.5 10.5 Z" fill="none" stroke="#ddd" stroke-width="0.7"/>
 <circle cx="103.5" cy="10.4" r="1.3" fill="none" stroke="#ddd" stroke-width="0.6"/>
</svg>
<div class="abs" style="left:735.4px;top:136px;font-size:6.9px;line-height:9px;color:#f0f0f0;-webkit-text-stroke:0.13px #f0f0f0">Terrain</div>
<div class="abs" style="left:824.4px;top:136px;font-size:6.9px;line-height:9px;color:#f0f0f0;-webkit-text-stroke:0.13px #f0f0f0">Parcelle</div>
<div class="abs" style="left:722.4px;top:152.2px;font-size:9.3px;line-height:11px;letter-spacing:-0.45px;color:#f2f2f2;-webkit-text-stroke:0.3px #f2f2f2">Editer Parcelle 1</div>
<div class="abs" style="left:830px;top:166.8px;width:14px;height:11.1px;background:#e23c3c;border-radius:1px">
 <svg class="abs" style="left:3.5px;top:2px" width="7" height="7" viewBox="0 0 7 7"><path d="M0.8 1.5 L6.2 1.5 M2.5 1.5 L2.5 0.7 L4.5 0.7 L4.5 1.5 M1.5 1.5 L2 6.4 L5 6.4 L5.5 1.5" fill="none" stroke="#fff" stroke-width="0.7"/></svg>
</div>
<div class="abs" style="left:848.8px;top:151.8px;width:42.4px;height:42.8px;background:#525252;border:1px solid #d0d0d0;box-shadow:0 1px 3px rgba(0,0,0,.5)">
 <svg class="abs" style="left:-1px;top:-1px" width="42" height="42" viewBox="0 0 42 42">
  <path d="M2.8 21 L21.4 10.6 L39.7 21 L21.4 31.9 Z" fill="none" stroke="#fff" stroke-width="1.05"/>
  <path d="M16.2 21.2 L15.9 17.6 L18.8 15.1 L21.5 18.4 L21.5 23.8 Z M21.5 23.8 L28.5 20 L28.5 15.3 L21.5 18.4 M18.8 15.1 L25.7 11.3 L28.5 15.3" fill="#525252" stroke="#fff" stroke-width="0.9" stroke-linejoin="round"/>
 </svg>
</div>
<div class="abs" style="left:722px;top:183.5px;width:38px;height:14.3px;background:#555;border-top:1.5px solid #1f9e8c"></div>
<svg class="abs" style="left:736px;top:186px" width="10" height="10" viewBox="0 0 10 10"><circle cx="5.2" cy="5.5" r="3.4" fill="none" stroke="#eee" stroke-width="0.8"/><path d="M5.2 4.5 L5.2 7.5" stroke="#eee" stroke-width="0.8"/><circle cx="5.2" cy="3.3" r="0.45" fill="#eee"/></svg>
<div class="abs" style="left:722.4px;top:197.8px;width:168.9px;height:298.9px;background:#565656;box-shadow:0 1px 2px rgba(0,0,0,.3)"></div>
<div class="abs" style="left:736.6px;top:205.6px;font-size:8.6px;line-height:11px;color:#f0f0f0;-webkit-text-stroke:0.13px #f0f0f0">Informations</div>
<div class="abs" style="left:736.6px;top:222px;font-size:5.4px;line-height:8px;color:#9a9a9a">Nom</div>
<div class="abs" style="left:736.6px;top:230px;font-size:5.7px;line-height:8px;color:#f0f0f0;-webkit-text-stroke:0.13px #f0f0f0">Parcelle 1</div>
<div class="abs" style="left:736.6px;top:238.6px;width:69.8px;height:1px;background:#8a8a8a"></div>
<div class="abs" style="left:736.6px;top:246.5px;width:141.4px;height:0;border-top:1px dotted #7a7a7a"></div>
<div class="abs" style="left:736px;top:254.2px;width:14.6px;height:10px;background:#1fa89a;border-radius:1px">
 <svg class="abs" style="left:3px;top:1.5px" width="9" height="7" viewBox="0 0 9 7"><circle cx="3.5" cy="4" r="2" fill="none" stroke="#fff" stroke-width="0.8"/><path d="M6.5 1 L6.5 4 M5 2.5 L8 2.5" stroke="#fff" stroke-width="0.8"/></svg>
</div>
<div class="abs" style="left:753.8px;top:255.6px;font-size:5.8px;line-height:8px;color:#f0f0f0;-webkit-text-stroke:0.13px #f0f0f0">Ajouter un point</div>

</body></html>
